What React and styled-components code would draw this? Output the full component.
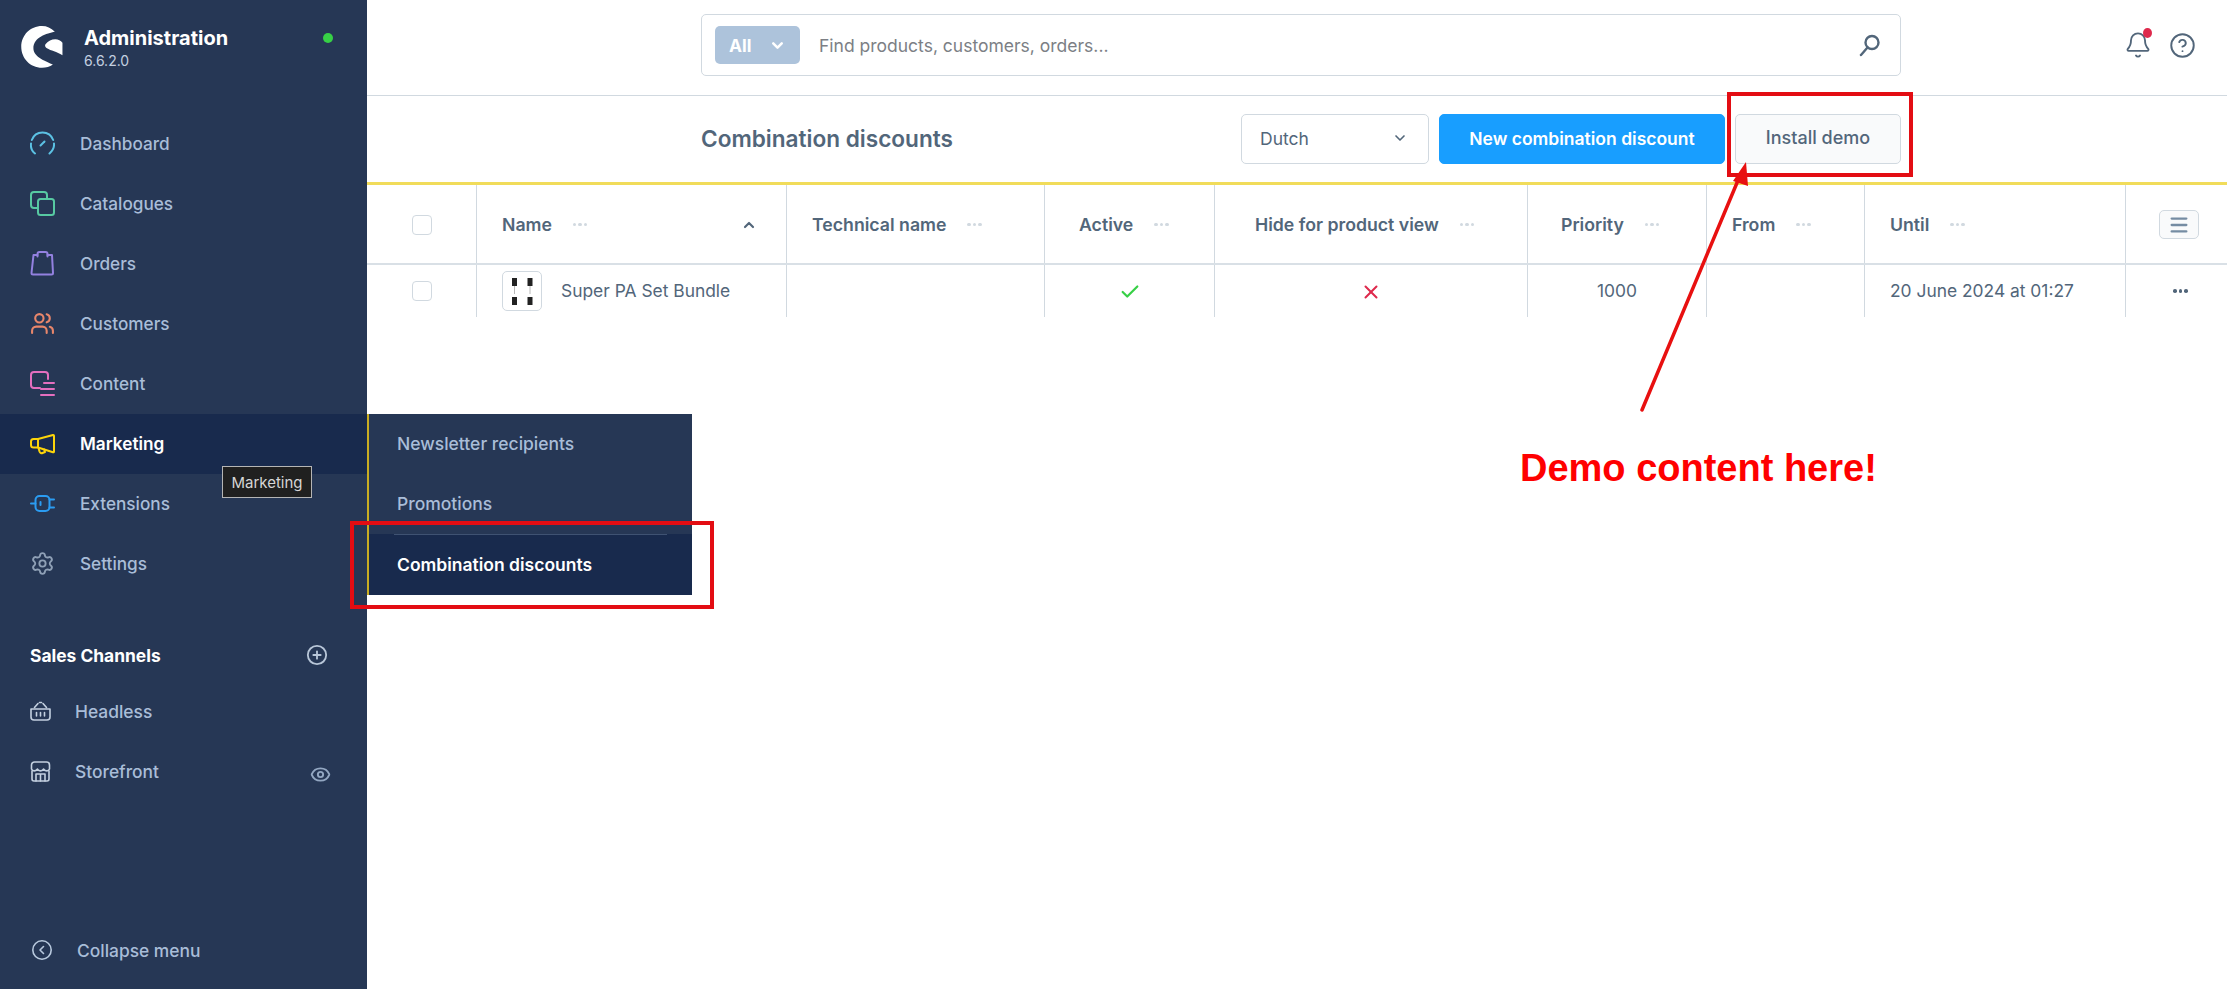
import React from 'react'
import styled, { createGlobalStyle } from 'styled-components'
import { Settings, Users, Eye, ChevronDown, ChevronUp, Check, X, Bell, CircleHelp, CirclePlus, Menu } from 'lucide-react'

const Global = createGlobalStyle`
  html, body { margin: 0; padding: 0; background: #fff; }
  body { font-family: Inter, "Noto Sans", sans-serif; color: #52667a; }
  * { box-sizing: border-box; }
`

const Page = styled.div`
  position: relative;
  display: flex;
  width: 100%;
  height: 100vh;
  overflow: hidden;
`

const Sidebar = styled.aside`
  width: 367px;
  flex: none;
  display: flex;
  flex-direction: column;
  background: #263755;
  color: #a9bdd8;
`
const Brand = styled.div`
  height: 114px;
  flex: none;
  display: flex;
  padding: 26px 0 0 21px;
`
const BrandText = styled.div`
  margin-left: 21px;
  display: flex;
  flex-direction: column;
`
const BrandTitle = styled.div`
  font-size: 20px;
  font-weight: 700;
  color: #fff;
  line-height: 24px;
`
const BrandVersion = styled.div`
  font-size: 14px;
  line-height: 20px;
  margin-top: 1px;
  color: #c3d0e0;
`
const StatusDot = styled.span`
  width: 10px;
  height: 10px;
  margin: 7px 34px 0 auto;
  border-radius: 50%;
  background: #37d046;
`
const NavItem = styled.div`
  height: 60px;
  display: flex;
  align-items: center;
  padding: 0 0 2px 30px;
  gap: 25px;
  font-size: 17.2px;
  font-weight: ${(p) => (p.$active ? 600 : 500)};
  color: ${(p) => (p.$active ? '#fff' : '#a9bdd8')};
  background: ${(p) => (p.$active ? '#182a4d' : 'transparent')};
`
const NavIcon = styled.svg`
  width: 25px;
  height: 25px;
  flex: none;
  fill: none;
  stroke: ${(p) => p.$color};
  stroke-width: 2;
  stroke-linecap: round;
  stroke-linejoin: round;
`
const SectionHead = styled.div`
  margin-top: 35px;
  height: 52px;
  display: flex;
  align-items: center;
  justify-content: space-between;
  padding: 0 39px 0 30px;
  font-size: 17.4px;
  font-weight: 700;
  color: #fff;
`
const ChannelItem = styled.div`
  height: 60px;
  display: flex;
  align-items: center;
  padding: 0 36px 0 30px;
  gap: 24px;
  font-size: 17.4px;
  font-weight: 500;
`
const ChannelIcon = styled.svg`
  width: 21px;
  height: 21px;
  flex: none;
  fill: none;
  stroke: #c3d0e0;
  stroke-width: 1.6;
  stroke-linecap: round;
  stroke-linejoin: round;
`
const ChannelEye = styled.span`
  margin-left: auto;
  margin-top: 6px;
  display: flex;
  color: #93a7c2;
`
const Collapse = styled.div`
  margin-top: auto;
  height: 76px;
  padding-bottom: 2px;
  display: flex;
  align-items: center;
  gap: 25px;
  padding-left: 32px;
  font-size: 17.4px;
  font-weight: 500;
`

const Main = styled.main`
  flex: 1;
  min-width: 0;
  display: flex;
  flex-direction: column;
`
const TopBar = styled.header`
  height: 96px;
  flex: none;
  display: flex;
  align-items: center;
  padding: 0 31px 5px 334px;
  border-bottom: 1px solid #d1d9e0;
`
const SearchBox = styled.div`
  width: 1200px;
  height: 62px;
  display: flex;
  align-items: center;
  padding: 0 19px 0 13px;
  border: 1px solid #d1d9e0;
  border-radius: 5px;
`
const SearchType = styled.div`
  width: 85px;
  height: 38px;
  display: flex;
  align-items: center;
  justify-content: space-between;
  padding: 0 14px;
  border-radius: 5px;
  background: #adc3db;
  color: #fff;
  font-size: 17.4px;
  font-weight: 700;
`
const Placeholder = styled.span`
  margin-left: 19px;
  flex: 1;
  font-size: 17.5px;
  color: #7c7f85;
`
const TopIcons = styled.div`
  margin-left: auto;
  display: flex;
  align-items: center;
  gap: 17px;
  color: #52667a;
`
const BellWrap = styled.span`
  position: relative;
  display: flex;
`
const BellDot = styled.span`
  position: absolute;
  top: -3px;
  right: 0;
  width: 9px;
  height: 10px;
  border-radius: 50%;
  background: #de294c;
`

const SmartBar = styled.div`
  height: 89px;
  flex: none;
  display: flex;
  align-items: center;
  padding: 0 326px 0 334px;
  border-bottom: 3px solid #f1dc5a;
`
const Title = styled.h1`
  flex: 1;
  margin: 0;
  padding-bottom: 2px;
  font-size: 22.6px;
  font-weight: 600;
  color: #52667a;
`
const Actions = styled.div`
  display: flex;
  gap: 10px;
`
const LangSelect = styled.div`
  width: 188px;
  height: 50px;
  display: flex;
  align-items: center;
  justify-content: space-between;
  padding: 0 20px 2px 18px;
  border: 1px solid #d1d9e0;
  border-radius: 5px;
  font-size: 17.5px;
`
const Button = styled.button`
  height: 50px;
  width: ${(p) => p.$width}px;
  padding: 0 0 ${(p) => (p.$primary ? 2 : 3)}px;
  border-radius: 5px;
  font-family: inherit;
  font-size: ${(p) => (p.$primary ? 17.5 : 18)}px;
  font-weight: ${(p) => (p.$primary ? 600 : 500)};
  color: ${(p) => (p.$primary ? '#fff' : '#52667a')};
  background: ${(p) => (p.$primary ? '#189eff' : '#f9fafb')};
  border: 1px solid ${(p) => (p.$primary ? '#189eff' : '#d1d9e0')};
`

const columns = '109px 310px 258px 170px 313px 179px 158px 261px 102px'
const HeadRow = styled.div`
  display: grid;
  grid-template-columns: ${columns};
  height: 80px;
  border-bottom: 2px solid #d9e0e6;
`
const Row = styled.div`
  display: grid;
  grid-template-columns: ${columns};
  height: 52px;
`
const Cell = styled.div`
  display: flex;
  align-items: center;
  padding-left: ${(p) => p.$pad ?? 25}px;
  justify-content: ${(p) => (p.$center ? 'center' : 'flex-start')};
  border-left: ${(p) => (p.$first ? 'none' : '1px solid #d1d9e0')};
  font-size: 17.4px;
  color: #52667a;
  white-space: nowrap;
`
const HeadCell = styled(Cell)`
  font-size: 17.7px;
  font-weight: 600;
  padding-top: 1px;
`
const RowText = styled.span`
  margin-bottom: 2px;
`
const Dots = styled.span`
  display: inline-flex;
  gap: 2px;
  margin-left: ${(p) => p.$gap ?? 21}px;
  & > i {
    width: 3.5px;
    height: 3.5px;
    border-radius: 50%;
    background: ${(p) => p.$color || '#d1d9e0'};
  }
`
const Sort = styled.span`
  margin-left: auto;
  margin-right: 29px;
  display: flex;
  color: #52667a;
`
const Checkbox = styled.span`
  width: 20px;
  height: 20px;
  border: 1px solid #d1d9e0;
  border-radius: 4px;
  background: #fff;
`
const Thumb = styled.span`
  width: 40px;
  height: 40px;
  margin-right: 19px;
  display: flex;
  border: 1px solid #d1d9e0;
  border-radius: 5px;
`
const ColumnButton = styled.span`
  width: 40px;
  height: 29px;
  display: flex;
  align-items: center;
  justify-content: center;
  border: 1px solid #d1d9e0;
  border-radius: 5px;
  background: #f9fafb;
  color: #758ca3;
`
const StatusMark = styled.span`
  display: flex;
  margin-top: 2px;
`

const Flyout = styled.div`
  position: absolute;
  left: 367px;
  top: 414px;
  width: 325px;
  background: #263755;
  border-left: 2px solid #c9ad22;
`
const FlyItem = styled.div`
  height: ${(p) => (p.$active ? 61 : 60)}px;
  display: flex;
  align-items: center;
  padding: 0 0 ${(p) => (p.$active ? 0 : 2)}px 28px;
  font-size: 17.5px;
  font-weight: ${(p) => (p.$active ? 600 : 500)};
  color: ${(p) => (p.$active ? '#fff' : '#a9bdd8')};
  background: ${(p) => (p.$active ? '#182a4d' : 'transparent')};
`
const FlyRule = styled.div`
  position: absolute;
  left: 25px;
  right: 25px;
  top: 120px;
  height: 1px;
  background: #3f5272;
`
const Tooltip = styled.div`
  position: absolute;
  left: 222px;
  top: 466px;
  width: 90px;
  height: 32px;
  display: flex;
  align-items: center;
  justify-content: center;
  background: #202020;
  border: 1px solid #b5b5b5;
  color: #d6d6d6;
  font-size: 15px;
`
const RedBox = styled.div`
  position: absolute;
  left: ${(p) => p.$x}px;
  top: ${(p) => p.$y}px;
  width: ${(p) => p.$w}px;
  height: ${(p) => p.$h}px;
  border: 4px solid #e30d13;
`
const Arrow = styled.svg`
  position: absolute;
  left: 1630px;
  top: 150px;
  width: 130px;
  height: 270px;
`
const DemoNote = styled.div`
  position: absolute;
  left: 1520px;
  top: 446px;
  font-family: "Liberation Sans", Arial, sans-serif;
  font-size: 38px;
  line-height: 44px;
  font-weight: 700;
  color: #f00;
  white-space: nowrap;
`

const Logo = () => (
  <svg width="42" height="42" viewBox="0 0 42 42.5" fill="#fff" style={{ flex: 'none' }}>
    <path d="M34 5.7C30 2 26 0 21 0 9 0 0 9.5 0 21s9 21.3 21 21.3c4 0 8-1 11-3.3C26 36 12.3 32 12.3 22.5 12.3 11 26 7.5 34 5.7z" />
    <path d="M24.5 18.5c3-3.5 6-5 10-5 3 0 5.500 1.500 7.200 3.500v12.500C36 26 30 25 26 22.500c-1.500-1-2.500-2.500-1.500-4z" />
  </svg>
)

const DashboardIcon = () => (
  <NavIcon viewBox="0 0 25 25" $color="#5cc2e4">
    <path d="M5 22.500C1 19.500.700 15 1 12.500M1.800 9C3.500 4.500 7.500 1.500 12.500 1.500c5 0 9 3 10.700 7.500M24 12.500c.3 3-1 7-4.500 10" />
    <path d="M10.500 14.500l4-4" />
  </NavIcon>
)
const CatalogueIcon = () => (
  <NavIcon viewBox="0 0 25 25" $color="#57c9a2">
    <path d="M8 17H4a3 3 0 0 1-3-3V4a3 3 0 0 1 3-3h10a3 3 0 0 1 3 3v4" />
    <rect x="8" y="8" width="16" height="16" rx="2.500" />
  </NavIcon>
)
const OrdersIcon = () => (
  <NavIcon viewBox="0 0 25 25" $color="#9381e0">
    <path d="M7.500 4H3.500L1.500 22c0 1 .5 1.500 1.500 1.500h18.500c1 0 1.500-.5 1.500-1.500L22 4h-4.500" />
    <path d="M7.500 5.500V3a2 2 0 0 1 2-2h6a2 2 0 0 1 2 2v2.500" />
  </NavIcon>
)
const ContentIcon = () => (
  <NavIcon viewBox="0 0 25 25" $color="#e46fbf">
    <path d="M18 8V4a3 3 0 0 0-3-3H4a3 3 0 0 0-3 3v10a3 3 0 0 0 3 3h6" />
    <path d="M14 12h10M11 18h13M11 24h13" />
  </NavIcon>
)
const MarketingIcon = () => (
  <NavIcon viewBox="0 0 25 25" $color="#fcd40a">
    <path d="M8 8L23 4c.7-.2 1 .2 1 1v15.500c0 .7-.5 1-1 .8L8 16.500H3.500A2.500 2.500 0 0 1 1 14v-3.500A2.500 2.500 0 0 1 3.500 8z" />
    <path d="M8 8v8.500M8.500 17l1 3.500c.5 1.500 2 2 3 1.500l2.500-1-.7-2.500" />
  </NavIcon>
)
const ExtensionsIcon = () => (
  <NavIcon viewBox="0 0 25 25" $color="#2b9cf2">
    <path d="M1 12.500h4.500M19.500 8.500H24M19.500 16.500H24" />
    <rect x="5.500" y="5" width="14" height="15" rx="4" />
    <path d="M10.500 11v3" />
  </NavIcon>
)
const BasketIcon = () => (
  <ChannelIcon viewBox="0 0 21 21">
    <path d="M1 8h19v8a3 3 0 0 1-3 3H4a3 3 0 0 1-3-3z" />
    <path d="M4.500 6.500L8 2.500M16.500 6.500L13 2.500M9.500 1.500h2" />
    <path d="M6.500 11.500v3.500M10.500 11.500v3.500M14.500 11.500v3.500" />
  </ChannelIcon>
)
const StoreIcon = () => (
  <ChannelIcon viewBox="0 0 21 21">
    <path d="M2 10v8a2 2 0 0 0 2 2h13a2 2 0 0 0 2-2v-8" />
    <path d="M1.500 8V4a3 3 0 0 1 3-3h12a3 3 0 0 1 3 3v4c-1 2.500-4 2.500-6 0-1 2.500-5 2.500-6 0-2 2.500-5 2.500-6 0z" />
    <path d="M6 20v-7h9v7M10.500 13v7" />
  </ChannelIcon>
)
const SearchIcon = () => (
  <svg width="23" height="23" viewBox="0 0 23 23" fill="none" stroke="#52667a" strokeWidth="2.400" strokeLinecap="round">
    <circle cx="14" cy="8.500" r="6.500" />
    <path d="M9.500 13.500L3 21" />
  </svg>
)
const DotsGlyph = () => (
  <Dots><i /><i /><i /></Dots>
)
const ProductThumb = () => (
  <Thumb>
    <svg width="38" height="38" viewBox="0 0 38 38">
      <path d="M11.500 10v12M27 10v12" stroke="#b8b8b8" strokeWidth="1" />
      <rect x="9" y="6" width="5" height="8" fill="#222" />
      <rect x="24.500" y="6" width="5" height="8" fill="#222" />
      <rect x="9" y="25" width="5" height="8" fill="#222" />
      <rect x="24.500" y="25" width="5" height="8" fill="#222" />
    </svg>
  </Thumb>
)

const navItems = [
  { label: 'Dashboard', icon: <DashboardIcon /> },
  { label: 'Catalogues', icon: <CatalogueIcon /> },
  { label: 'Orders', icon: <OrdersIcon /> },
  { label: 'Customers', icon: <Users size={25} color="#e8866b" strokeWidth={2} style={{ flex: 'none' }} /> },
  { label: 'Content', icon: <ContentIcon /> },
  { label: 'Marketing', icon: <MarketingIcon />, active: true },
  { label: 'Extensions', icon: <ExtensionsIcon /> },
  { label: 'Settings', icon: <Settings size={25} color="#8fa0b6" strokeWidth={1.800} style={{ flex: 'none' }} /> },
]

const heads = [
  { label: 'Technical name', pad: 25 },
  { label: 'Active', pad: 34 },
  { label: 'Hide for product view', pad: 40 },
  { label: 'Priority', pad: 33 },
  { label: 'From', pad: 25 },
  { label: 'Until', pad: 25 },
]

export default function App() {
  return (
    <Page>
      <Global />
      <Sidebar>
        <Brand>
          <Logo />
          <BrandText>
            <BrandTitle>Administration</BrandTitle>
            <BrandVersion>6.6.2.0</BrandVersion>
          </BrandText>
          <StatusDot />
        </Brand>
        {navItems.map((item) => (
          <NavItem key={item.label} $active={item.active}>
            {item.icon}
            {item.label}
          </NavItem>
        ))}
        <SectionHead>
          Sales Channels
          <CirclePlus size={22} color="#b8c6d8" strokeWidth={2} />
        </SectionHead>
        <ChannelItem>
          <BasketIcon />
          Headless
        </ChannelItem>
        <ChannelItem>
          <StoreIcon />
          Storefront
          <ChannelEye><Eye size={21} strokeWidth={2.200} /></ChannelEye>
        </ChannelItem>
        <Collapse>
          <svg width="20" height="20" viewBox="0 0 20 20" fill="none" stroke="#b8c9de" strokeWidth="1.600">
            <circle cx="10" cy="10" r="9.200" />
            <path d="M11.500 6.500L8 10l3.500 3.500" strokeLinecap="round" strokeLinejoin="round" />
          </svg>
          Collapse menu
        </Collapse>
      </Sidebar>

      <Main>
        <TopBar>
          <SearchBox>
            <SearchType>
              All
              <ChevronDown size={17} strokeWidth={3.500} />
            </SearchType>
            <Placeholder>Find products, customers, orders...</Placeholder>
            <SearchIcon />
          </SearchBox>
          <TopIcons>
            <BellWrap>
              <Bell size={28} strokeWidth={1.600} />
              <BellDot />
            </BellWrap>
            <CircleHelp size={27} strokeWidth={1.700} />
          </TopIcons>
        </TopBar>

        <SmartBar>
          <Title>Combination discounts</Title>
          <Actions>
            <LangSelect>
              Dutch
              <ChevronDown size={16} strokeWidth={2.500} />
            </LangSelect>
            <Button $primary $width={286}>New combination discount</Button>
            <Button $width={166}>Install demo</Button>
          </Actions>
        </SmartBar>

        <HeadRow>
          <HeadCell $first $center $pad={0}><Checkbox /></HeadCell>
          <HeadCell>
            Name
            <DotsGlyph />
            <Sort><ChevronUp size={16} strokeWidth={3.200} /></Sort>
          </HeadCell>
          {heads.map((h) => (
            <HeadCell key={h.label} $pad={h.pad}>
              {h.label}
              <DotsGlyph />
            </HeadCell>
          ))}
          <HeadCell $center $pad={5}>
            <ColumnButton><Menu size={22} strokeWidth={2.500} /></ColumnButton>
          </HeadCell>
        </HeadRow>

        <Row>
          <Cell $first $center $pad={0}><Checkbox /></Cell>
          <Cell>
            <ProductThumb />
            <RowText>Super PA Set Bundle</RowText>
          </Cell>
          <Cell />
          <Cell $center $pad={0}><StatusMark><Check size={22} color="#37d046" strokeWidth={2.400} /></StatusMark></Cell>
          <Cell $center $pad={0}><StatusMark><X size={22} color="#de294c" strokeWidth={2.200} /></StatusMark></Cell>
          <Cell $center $pad={0}><RowText>1000</RowText></Cell>
          <Cell />
          <Cell><RowText>20 June 2024 at 01:27</RowText></Cell>
          <Cell $center $pad={8}><Dots $color="#52667a" $gap={0}><i /><i /><i /></Dots></Cell>
        </Row>
      </Main>

      <Flyout>
        <FlyItem>Newsletter recipients</FlyItem>
        <FlyItem>Promotions</FlyItem>
        <FlyItem $active>Combination discounts</FlyItem>
        <FlyRule />
      </Flyout>
      <Tooltip>Marketing</Tooltip>

      <RedBox $x={350} $y={521} $w={364} $h={88} />
      <RedBox $x={1727} $y={92} $w={186} $h={85} />
      <Arrow viewBox="0 0 130 270">
        <path d="M12 260L109 28" stroke="#e81010" strokeWidth="3.500" strokeLinecap="round" />
        <path d="M116 12L103 31 118 36z" fill="#e81010" />
      </Arrow>
      <DemoNote>Demo content here!</DemoNote>
    </Page>
  )
}
